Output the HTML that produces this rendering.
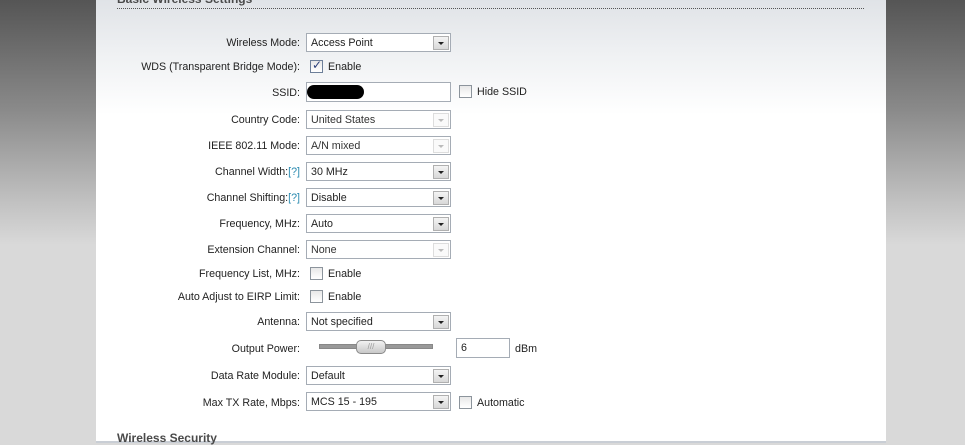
<!DOCTYPE html>
<html><head><style>
*{margin:0;padding:0;box-sizing:border-box}
body{width:965px;height:443px;overflow:hidden;position:relative;font-family:"Liberation Sans",Arial,sans-serif;font-size:10.7px;color:#222;background:#d9d9d9}
.side{position:absolute;top:0;height:443px;background:linear-gradient(#555 0px,#8a8a8a 110px,#c0c0c0 200px,#d9d9d9 245px,#d9d9d9 443px)}
#panel{position:absolute;left:96px;top:0;width:790px;height:443px;background:linear-gradient(#e0e3e7 0px,#eef0f2 50px,#fff 115px,#fff)}
.dot{position:absolute;left:117px;top:8px;width:747px;border-top:1px dotted #555}
.h{position:absolute;left:117px;font-weight:bold;font-size:12px;color:#4a4a4a}
.l{position:absolute;right:665px;white-space:nowrap;line-height:14px;margin-top:1px}
.l b{font-weight:normal;color:#2a8ab0}
.s{position:absolute;left:306px;width:145px;height:19px;border:1px solid #a5acb5;background:#fff;padding:3px 4px 2px;line-height:13px}
.s i{position:absolute;right:1px;top:2px;width:16px;height:14px;background:linear-gradient(#f4f4f4,#d8d8d8);border:1px solid #b0b0b0}
.s i:after{content:"";position:absolute;left:4px;top:5px;border-left:3px solid transparent;border-right:3px solid transparent;border-top:3px solid #222}
.s.d{color:#333}.s.d i{background:#fafafa;border-color:#ddd}.s.d i:after{border-top-color:#bbb}
.c{position:absolute;width:13px;height:13px;border:1px solid #8c949c;background:linear-gradient(#e8e8e8,#fff)}
.t{position:absolute;white-space:nowrap;line-height:14px;margin-top:1px}
</style></head><body>
<div class="side" style="left:0;width:96px"></div>
<div class="side" style="left:886px;width:79px"></div>
<div id="panel"></div>
<div style="position:absolute;left:96px;top:441px;width:790px;height:2px;background:#c9ced5"></div>
<div class="h" style="top:-8px">Basic Wireless Settings</div>
<div class="dot"></div>

<div class="l" style="top:35px">Wireless Mode:</div><div class="s" style="top:33px">Access Point<i></i></div>
<div class="l" style="top:59px">WDS (Transparent Bridge Mode):</div><div class="c" style="left:310px;top:60px;border-color:#6d7f99"><span style="position:absolute;left:1px;top:-3px;font-size:12px;color:#2a3f7a">✓</span></div><div class="t" style="left:328px;top:59px">Enable</div>
<div class="l" style="top:85px">SSID:</div><div class="s" style="top:82px;height:20px"><span style="position:absolute;left:0;top:2px;width:57px;height:14px;background:#000;border-radius:8px"></span></div>
<div class="c" style="left:459px;top:85px"></div><div class="t" style="left:477px;top:84px">Hide SSID</div>
<div class="l" style="top:112px">Country Code:</div><div class="s d" style="top:110px">United States<i></i></div>
<div class="l" style="top:138px">IEEE 802.11 Mode:</div><div class="s d" style="top:136px">A/N mixed<i></i></div>
<div class="l" style="top:164px">Channel Width:<b>[?]</b></div><div class="s" style="top:162px">30 MHz<i></i></div>
<div class="l" style="top:190px">Channel Shifting:<b>[?]</b></div><div class="s" style="top:188px">Disable<i></i></div>
<div class="l" style="top:216px">Frequency, MHz:</div><div class="s" style="top:214px">Auto<i></i></div>
<div class="l" style="top:242px">Extension Channel:</div><div class="s d" style="top:240px">None<i></i></div>
<div class="l" style="top:266px">Frequency List, MHz:</div><div class="c" style="left:310px;top:267px"></div><div class="t" style="left:328px;top:266px">Enable</div>
<div class="l" style="top:289px">Auto Adjust to EIRP Limit:</div><div class="c" style="left:310px;top:290px"></div><div class="t" style="left:328px;top:289px">Enable</div>
<div class="l" style="top:314px">Antenna:</div><div class="s" style="top:312px">Not specified<i></i></div>
<div class="l" style="top:341px">Output Power:</div>
<div style="position:absolute;left:319px;top:344px;width:114px;height:5px;background:#999;border:1px solid #888"></div>
<div style="position:absolute;left:356px;top:340px;width:30px;height:14px;border:1px solid #8a8a8a;border-radius:5px;background:linear-gradient(#f2f2f2,#c8c8c8);font-size:8px;color:#999;text-align:center;line-height:12px">///</div>
<div class="s" style="left:456px;width:54px;top:338px;height:20px">6</div><div class="t" style="left:515px;top:341px">dBm</div>
<div class="l" style="top:368px">Data Rate Module:</div><div class="s" style="top:366px">Default<i></i></div>
<div class="l" style="top:395px">Max TX Rate, Mbps:</div><div class="s" style="top:392px">MCS 15 - 195<i></i></div>
<div class="c" style="left:459px;top:396px"></div><div class="t" style="left:477px;top:395px">Automatic</div>
<div class="h" style="top:431px">Wireless Security</div>
</body></html>
